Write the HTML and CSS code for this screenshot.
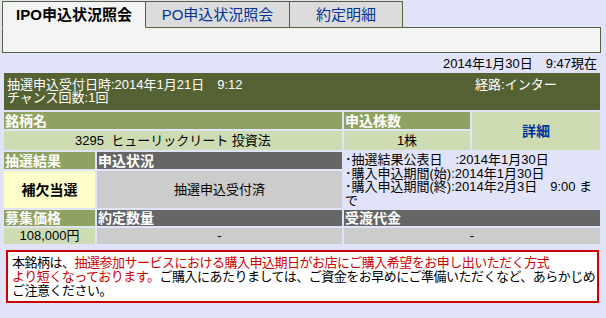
FILE: index.html
```html
<!DOCTYPE html>
<html lang="ja">
<head>
    <meta charset="UTF-8">
    <meta name="viewport" content="width=device-width, initial-scale=1.0">
    <title>IPO申込状況照会</title>
    <link rel="stylesheet" href="styles.css">
</head>
<body>
    <div class="page">
        <ul class="tabs">
            <li class="tab tab-ipo active">IPO申込状況照会</li>
            <li class="tab tab-po"><a href="#">PO申込状況照会</a></li>
            <li class="tab tab-trade"><a href="#">約定明細</a></li>
        </ul>
        <div class="tab-panel"></div>

        <div class="as-of">2014年1月30日　9:47現在</div>

        <table class="detail">
            <colgroup>
                <col class="col-1">
                <col class="col-2">
                <col class="col-3">
                <col class="col-4">
            </colgroup>
            <tr class="row-summary">
                <td colspan="4" class="summary">
                    <div class="summary-inner">
                        <div>抽選申込受付日時:2014年1月21日　9:12<br>チャンス回数:1回</div>
                        <div class="route">経路:インター</div>
                    </div>
                </td>
            </tr>
            <tr class="row-head">
                <th colspan="2" class="head-green">銘柄名</th>
                <th class="head-green">申込株数</th>
                <td rowspan="2" class="link-cell"><a href="#">詳細</a></td>
            </tr>
            <tr class="row-name">
                <td colspan="2" class="val-green">3295&nbsp;&nbsp;ヒューリックリート 投資法</td>
                <td class="val-green">1株</td>
            </tr>
            <tr class="row-head">
                <th class="head-green">抽選結果</th>
                <th class="head-gray">申込状況</th>
                <td colspan="2" rowspan="2" class="schedule">･抽選結果公表日　:2014年1月30日<br>･購入申込期間(始):2014年1月30日<br>･購入申込期間(終):2014年2月3日　9:00 まで</td>
            </tr>
            <tr class="row-result">
                <td class="val-yellow">補欠当選</td>
                <td class="val-gray">抽選申込受付済</td>
            </tr>
            <tr class="row-small">
                <th class="head-green">募集価格</th>
                <th class="head-gray">約定数量</th>
                <th colspan="2" class="head-gray">受渡代金</th>
            </tr>
            <tr class="row-small">
                <td class="val-green">108,000円</td>
                <td class="val-gray">-</td>
                <td colspan="2" class="val-gray">-</td>
            </tr>
        </table>

        <div class="notice">本銘柄は、<span class="warn">抽選参加サービスにおける購入申込期日がお店にご購入希望をお申し出いただく方式<br>より短くなっております。</span>ご購入にあたりましては、ご資金をお早めにご準備いただくなど、あらかじめ<br>ご注意ください。</div>
    </div>
</body>
</html>
```

FILE: styles.css
```css
body {
    margin: 0;
    background-color: #e1e4f8;
    font-family: "Liberation Sans", "Noto Sans CJK JP", sans-serif;
    font-size: 13px;
    color: #000;
}
.page {
    padding: 1px 0 0 2px;
}
.tabs {
    display: flex;
    margin: 0 0 -1px 0;
    padding: 0;
    list-style: none;
}
.tab {
    box-sizing: border-box;
    height: 27px;
    border: 1px solid #566338;
    border-left: none;
    background-color: #dcdcdc;
    font-size: 15px;
    line-height: 25px;
    text-align: center;
}
.tab a {
    color: #003399;
    text-decoration: none;
}
.tab-ipo {
    width: 144px;
    border-left: 1px solid #566338;
}
.tab-po {
    width: 144px;
}
.tab-trade {
    width: 113px;
}
.tab.active {
    position: relative;
    background-color: #f4f4f4;
    border-bottom-color: #f4f4f4;
    font-weight: bold;
}
.tab-panel {
    box-sizing: border-box;
    width: 599px;
    height: 26px;
    border: 1px solid #566338;
    background-color: #f4f4f4;
}
.as-of {
    box-sizing: border-box;
    width: 599px;
    margin-top: 4px;
    padding-right: 4px;
    text-align: right;
    line-height: 14px;
}
.detail {
    width: 600px;
    table-layout: fixed;
    border-collapse: separate;
    border-spacing: 2px;
}
.col-1 { width: 91px; }
.col-2 { width: 245px; }
.col-3 { width: 126px; }
.col-4 { width: 128px; }
.detail th,
.detail td {
    padding: 1px;
    line-height: 14px;
    font-weight: normal;
}
.detail th {
    text-align: left;
    color: #fff;
    font-size: 14px;
    font-weight: bold;
}
.row-summary { height: 37px; }
.row-head { height: 17px; }
.row-name { height: 19px; }
.row-result { height: 37px; }
.row-small { height: 16px; }
.summary {
    background-color: #556234;
    color: #fff;
}
.detail .summary {
    padding: 4px 3px 5px;
    line-height: 13.5px;
}
.summary-inner {
    display: flex;
    justify-content: space-between;
}
.route {
    width: 122px;
}
.head-green {
    background-color: #8ea361;
}
.head-gray {
    background-color: #666666;
}
.val-green {
    background-color: #cedcb4;
    text-align: center;
}
.val-gray {
    background-color: #cccccc;
    text-align: center;
}
.val-yellow {
    background-color: #ffffcc;
    text-align: center;
    font-size: 14px;
}
.detail .val-yellow {
    font-weight: bold;
}
.link-cell {
    background-color: #cedcb4;
    text-align: center;
}
.link-cell a {
    color: #003399;
    font-size: 14px;
    font-weight: bold;
    text-decoration: none;
}
.detail .schedule {
    vertical-align: top;
    padding: 1px 5px 0 1px;
    line-height: 13.5px;
    line-break: anywhere;
}
.notice {
    box-sizing: border-box;
    width: 593px;
    margin: 4px 0 0 4px;
    padding: 4px 4px 3px;
    border: 2px solid #cc0000;
    background-color: #fff;
    line-height: 14px;
    letter-spacing: -0.5px;
    white-space: nowrap;
}
.warn {
    color: #cc0000;
}
```
